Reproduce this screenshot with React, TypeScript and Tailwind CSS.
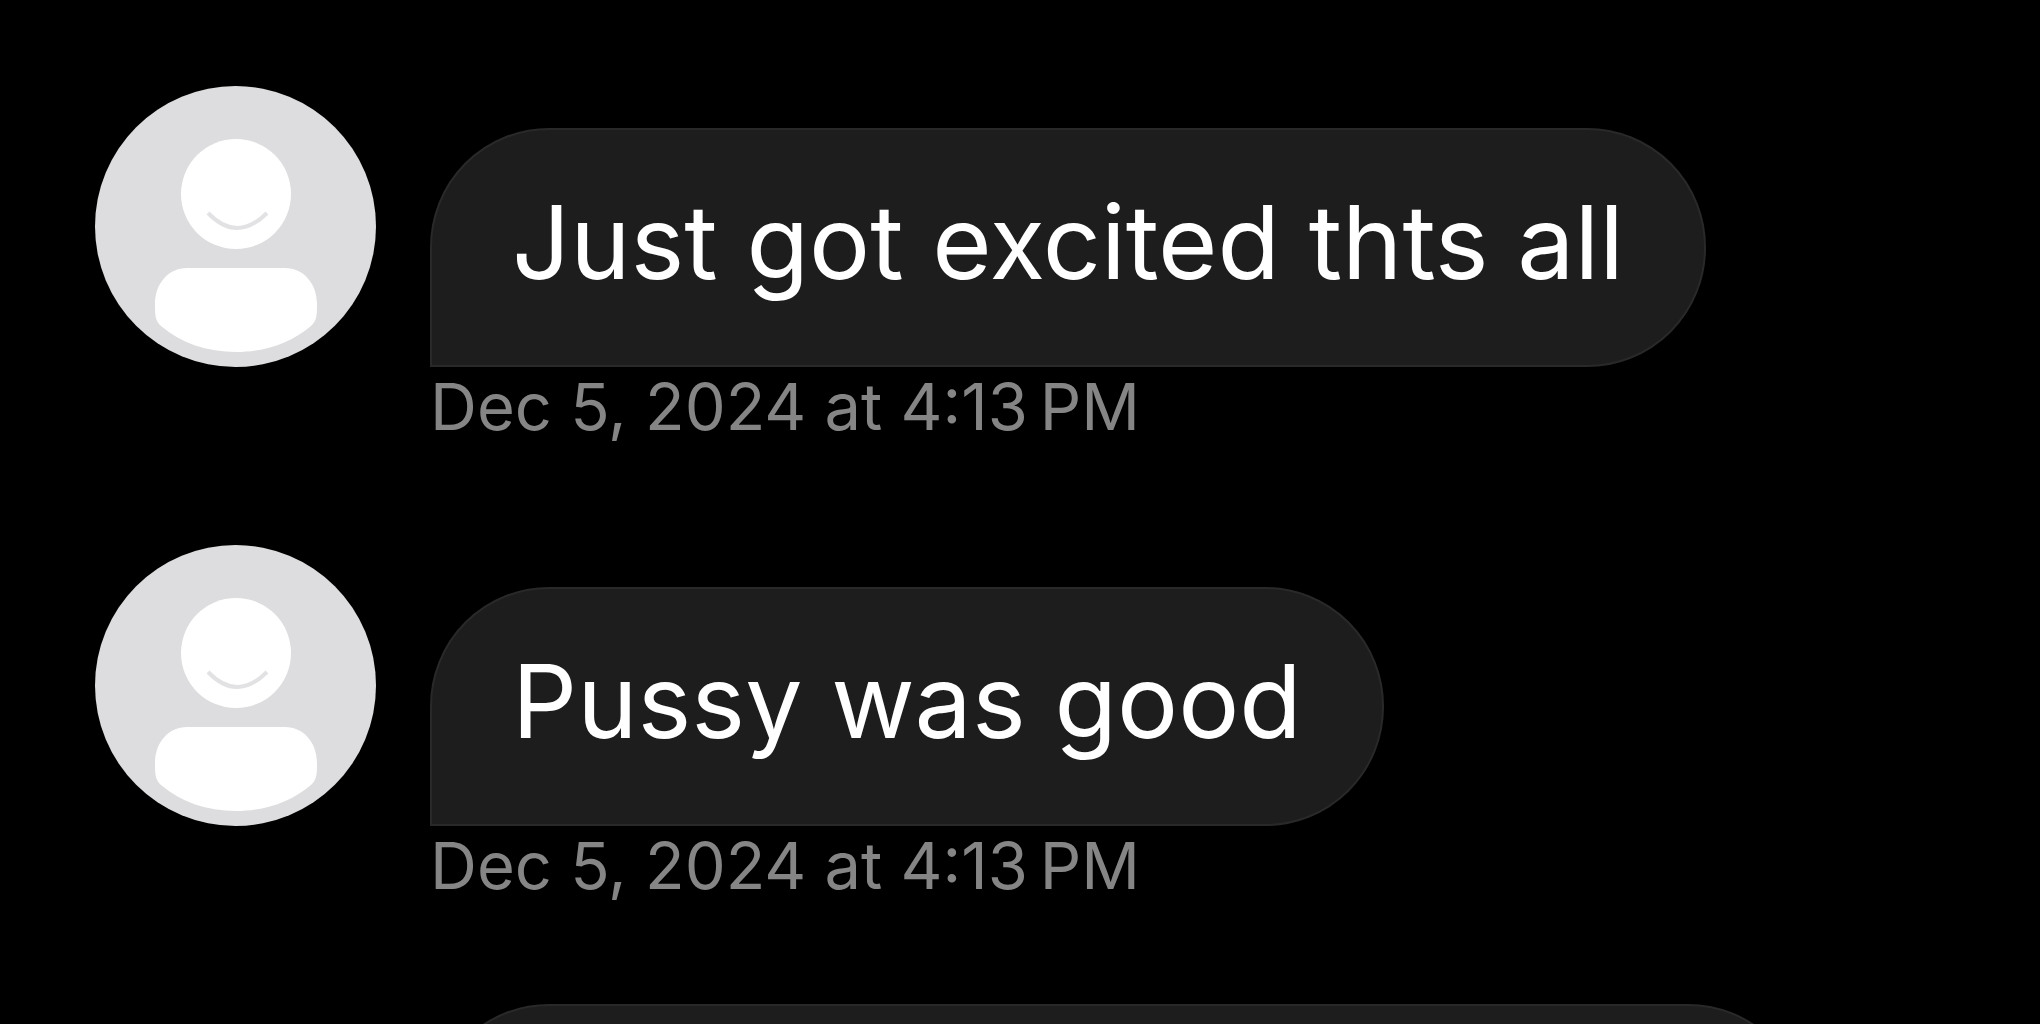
type Message = {
  id: number;
  text: string;
  time: string;
};

const messages: Message[] = [
  { id: 1, text: "Just got excited thts all", time: "Dec 5, 2024 at 4:13\u202fPM" },
  { id: 2, text: "Pussy was good", time: "Dec 5, 2024 at 4:13\u202fPM" },
];

function Avatar() {
  return (
    <svg viewBox="0 0 281 281" className="size-[281px] shrink-0" role="img" aria-label="Profile picture">
      <circle cx="140.5" cy="140.5" r="140.5" fill="#dddddf" />
      <circle cx="141" cy="108" r="55" fill="#fff" />
      <path d="M113 127 Q142 157 172 127" fill="none" stroke="#e2e2e4" strokeWidth="4" />
      <path
        d="M92 182 H190 C208 182 222 197 222 218 C222 228 222 235 216 240 C196 257 170 266 141 266 C112 266 86 257 66 240 C60 235 60 228 60 218 C60 197 74 182 92 182 Z"
        fill="#fff"
      />
    </svg>
  );
}

function MessageItem({ message }: { message: Message }) {
  return (
    <li>
      <div className="flex items-end gap-[54px]">
        <Avatar />
        <p className="rounded-[119px] rounded-bl-none border-2 border-[#292929] bg-[#1d1d1d] px-20 pt-[47px] pb-[58px] text-[102px] leading-[130px] text-white">
          {message.text}
        </p>
      </div>
      <time className="ml-[335px] block text-[65px] leading-[80px] text-[#858585]">{message.time}</time>
    </li>
  );
}

export default function App() {
  return (
    <main className="h-screen overflow-hidden bg-black pl-[95px] pt-[86px] font-['Inter',sans-serif]">
      <ul className="flex flex-col gap-[98px]">
        {messages.map((message) => (
          <MessageItem key={message.id} message={message} />
        ))}
        {/* next message, still scrolled below the fold */}
        <li className="ml-[335px] mr-[233px] h-[370px] rounded-[119px] rounded-bl-none border-2 border-[#292929] bg-[#1d1d1d]" />
      </ul>
    </main>
  );
}
